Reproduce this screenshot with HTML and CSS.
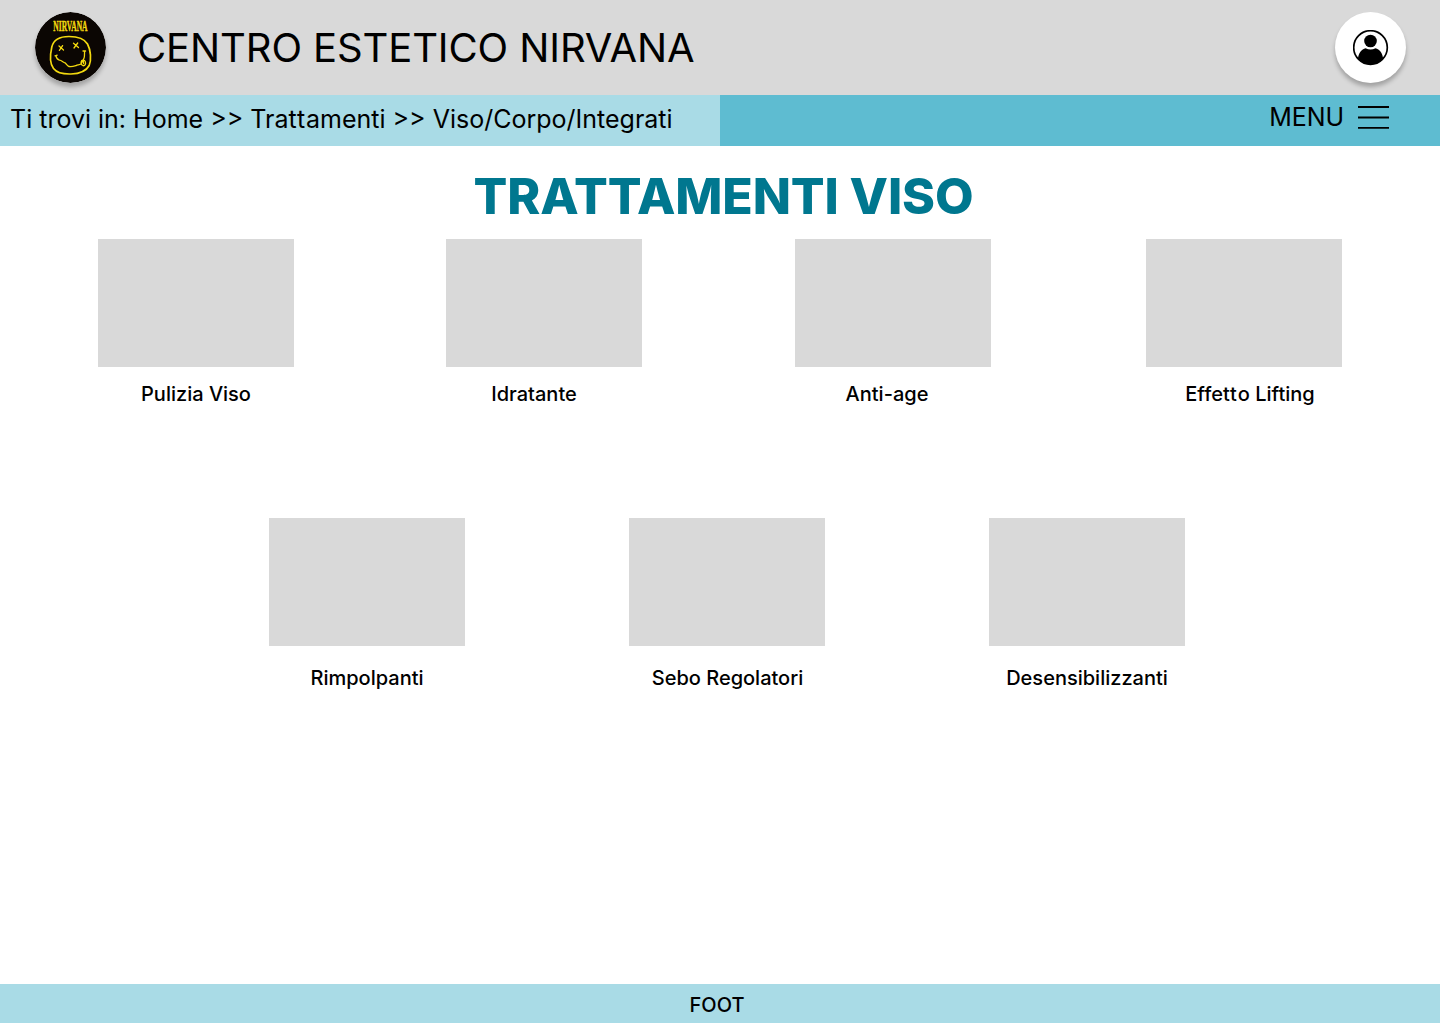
FILE: index.html
```html
<!DOCTYPE html>
<html lang="it">
<head>
<meta charset="utf-8">
<title>Centro Estetico Nirvana</title>
<link rel="stylesheet" href="styles.css">
</head>
<body>
<header class="header">
  <svg class="logo" viewBox="0 0 71 71">
    <circle cx="35.5" cy="35.5" r="35.5" fill="#0b0603"/>
    <text class="logo-text" transform="translate(18.3 18.5) scale(.56 1.52)" textLength="61" lengthAdjust="spacingAndGlyphs">NIRVANA</text>
    <g fill="none" stroke="#f3d90f" stroke-width="1.7" stroke-linecap="round" stroke-linejoin="round">
      <path d="M34 24.5C25 24.5 18.500 28 16.800 35C15 43 15 52 18.500 56.500C22 61 29 62.200 36 62C45 61.700 51.500 58.500 54.200 53.500C56.500 48 55.800 38 52.500 32C49 26 42 24.500 34 24.500Z"/>
      <path stroke-width="1.300" d="M24 34l4.500 4M27.600 33.600l-3.200 4.800M38.500 31.200l5 4.300M42.700 31l-3.700 5M20 43.800l2.200-.6M20.800 43.800c.8 2.500 1.400 4 3.700 4.400 2.200.2 3.200 2 5 2.500 1.800.3 2.200 3.200 4.500 3.800 2.400.6 5-.2 7-.8 1.500-1.400 4.500 0 5.600-2.700.8-2.600 2.700-4 2.800-6.500l.2-5.700M48 39h2.600M46.700 48.500c-1.200 2-.7 4.500 1.300 5.200 2.200.3 3.200-2 2.200-4.200-.8-1.600-2.600-1.600-3.500-1zM48.300 48.800l.3 2.700"/>
    </g>
  </svg>
  <div class="brand">CENTRO ESTETICO NIRVANA</div>
  <div class="account">
    <svg width="36" height="36" viewBox="0 0 36 36">
      <circle cx="17.500" cy="17.500" r="16.800" fill="none" stroke="#000" stroke-width="1.700"/>
      <circle cx="17.500" cy="11" r="6.300"/>
      <path d="M4.900 29C5.400 23 8.600 19 12.600 18.200Q17.500 20.700 22.500 18.200C26.500 19 29.700 23 30.200 29A17.500 17.500 0 0 1 4.900 29Z"/>
    </svg>
  </div>
</header>
<nav class="bar">
  <div class="crumbs">Ti trovi in: Home &gt;&gt; Tra<span class="loose">tt</span>amenti &gt;&gt; Viso/Corpo/Integrati</div>
  <div class="menu">
    <span class="menu-text">MENU</span>
    <svg class="burger" width="31" height="24" viewBox="0 0 31 24" stroke="#000" stroke-width="1.800"><path d="M0 1h31M0 11.500h31M0 21.900h31"/></svg>
  </div>
</nav>
<main class="main">
  <h1 class="heading">TRATTAMENTI VISO</h1>
  <section class="row row-face">
    <article class="card"><div class="thumb"></div><p class="label">Pulizia Viso</p></article>
    <article class="card"><div class="thumb"></div><p class="label label-hydrate">Idratante</p></article>
    <article class="card"><div class="thumb"></div><p class="label label-age">Anti-age</p></article>
    <article class="card"><div class="thumb"></div><p class="label label-lift">Effe<span class="loose">tt</span>o Lifting</p></article>
  </section>
  <section class="row row-care">
    <article class="card"><div class="thumb"></div><p class="label">Rimpolpanti</p></article>
    <article class="card"><div class="thumb"></div><p class="label label-sebo">Sebo Regolatori</p></article>
    <article class="card"><div class="thumb"></div><p class="label">Desensibilizzanti</p></article>
  </section>
</main>
<footer class="footer">FOOT</footer>
</body>
</html>
```

FILE: styles.css
```css
* { box-sizing: border-box; }
body {
  margin: 0;
  height: 1024px;
  padding-bottom: 1px;
  display: flex;
  flex-direction: column;
  overflow: hidden;
  background: #fff;
  color: #000;
  font-family: Inter, sans-serif;
}
.header {
  flex: none;
  height: 95px;
  padding: 0 34px 0 35px;
  display: flex;
  align-items: center;
  background: #d9d9d9;
}
.logo {
  width: 71px;
  height: 71px;
  border-radius: 50%;
  box-shadow: 0 4px 4px rgba(0, 0, 0, .25);
}
.logo-text {
  font: bold 10px "Liberation Serif", serif;
  fill: #f3d90f;
  stroke: #f3d90f;
  stroke-width: .3px;
}
.brand {
  margin-left: 31px;
  font-size: 40px;
  font-weight: 380;
  letter-spacing: -.11px;
  line-height: 48px;
  white-space: nowrap;
}
.account {
  margin-left: auto;
  width: 71px;
  height: 71px;
  border-radius: 50%;
  background: #fff;
  display: flex;
  align-items: center;
  justify-content: center;
  box-shadow: 0 4px 4px rgba(0, 0, 0, .25);
}
.bar {
  flex: none;
  height: 51px;
  display: flex;
  justify-content: space-between;
  background: #5ebcd1;
  font-size: 25px;
  font-weight: 380;
  line-height: 30px;
}
.crumbs {
  width: 720px;
  padding: 9px 0 0 10px;
  background: #a9dbe6;
  white-space: nowrap;
}
.loose { letter-spacing: .9px; }
.menu {
  display: flex;
  gap: 14px;
  padding: 7px 51px 0 0;
}
.menu-text { letter-spacing: -.1px; }
.burger { margin-top: 4px; }
.main { flex: 1; }
.heading {
  margin: 0;
  padding: 20px 0 0 7px;
  color: #00778f;
  font-size: 50px;
  font-weight: 800;
  letter-spacing: -.13px;
  line-height: 60px;
  text-align: center;
}
.row { display: flex; }
.row-face {
  display: grid;
  grid-template-columns: 348px 349px 351px 196px;
  padding: 13px 98px 0;
}
.row-care {
  gap: 164px;
  padding: 112px 0 0 269px;
}
.card { width: 196px; }
.thumb {
  height: 128px;
  background: #d9d9d9;
}
.label {
  margin: 15px 0 0;
  font-size: 20px;
  font-weight: 500;
  line-height: 24px;
  text-align: center;
  white-space: nowrap;
}
.row-care .label { margin-top: 20px; }
.row .label-hydrate { padding-right: 20px; }
.row .label-age { padding-right: 12px; }
.row .label-lift { padding-left: 12px; }
.row .label-sebo { padding-left: 1px; }
.footer {
  flex: none;
  height: 39px;
  padding: 9px 6px 0 0;
  background: #a9dbe6;
  font-size: 20px;
  font-weight: 500;
  line-height: 24px;
  text-align: center;
}
```
